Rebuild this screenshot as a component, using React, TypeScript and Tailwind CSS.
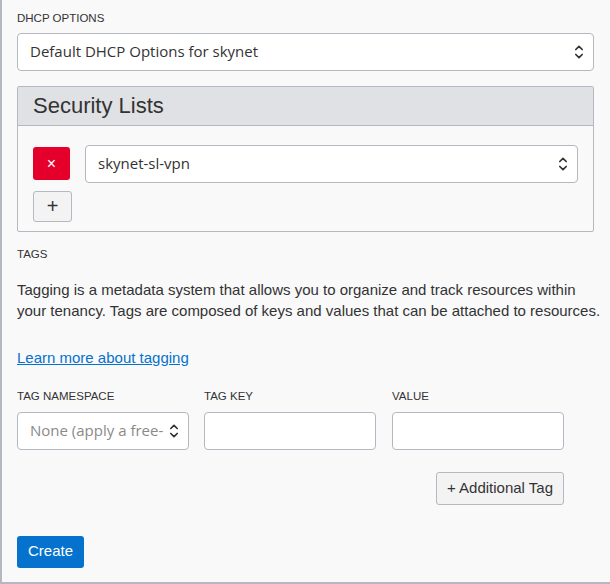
import React from 'react';

function Chevrons() {
  return (
    <svg width="10" height="16" viewBox="0 0 10 16" fill="none" stroke="#333" strokeWidth="1.7" strokeLinecap="round" strokeLinejoin="round">
      <path d="M1.8 5.5 L5 2.3 L8.2 5.5" />
      <path d="M1.8 10.5 L5 13.7 L8.2 10.5" />
    </svg>
  );
}

function SelectBox({ value, muted, className }: { value: string; muted?: boolean; className: string }) {
  return (
    <div className={`flex items-center bg-white border border-[#b4b8c0] rounded-[4px] overflow-hidden ${className}`}>
      <span
        className={`flex-1 whitespace-nowrap overflow-hidden text-[15px] ${muted ? 'text-[#8a8a8a]' : 'text-[#333]'}`}
        style={{ fontFamily: '"Open Sans", sans-serif' }}
      >
        {value}
      </span>
      <span className="pl-1 pr-[9px] flex items-center"><Chevrons /></span>
    </div>
  );
}

const label = 'text-[11.5px] text-[#333] uppercase leading-none';

export default function App() {
  return (
    <div className="w-[610px] h-[584px] bg-[#f9f9fa] border-l-2 border-b-2 border-[#b4b8c0] px-[15px] pt-[13px]" style={{ fontFamily: '"Liberation Sans", Arial, sans-serif' }}>
      <div className={label}>DHCP Options</div>
      <SelectBox value="Default DHCP Options for skynet" className="mt-[8px] h-[38px] w-[577px] pl-[12px]" />

      {/* Security lists panel */}
      <div className="mt-[15px] w-[577px] h-[146px] border border-[#b4b8c0] rounded-[2px] bg-[#f9f9fa]">
        <div className="h-[39px] bg-[#dfe1e5] border-b border-[#b4b8c0] px-[15px] flex items-center">
          <span className="text-[22px] text-[#333] leading-none">Security Lists</span>
        </div>
        <div className="pl-[15px] pt-[19px]">
          <div className="flex items-center gap-[15px]">
            <button className="w-[37px] h-[33px] bg-[#e4002b] rounded-[3px] text-white text-[16px] flex items-center justify-center">×</button>
            <SelectBox value="skynet-sl-vpn" className="h-[38px] w-[493px] pl-[12px]" />
          </div>
          <button className="mt-[8px] w-[39px] h-[31px] bg-[#f3f3f4] border border-[#b4b8c0] rounded-[3px] text-[#333] text-[20px] font-light flex items-center justify-center leading-none">+</button>
        </div>
      </div>

      <div className={`${label} mt-[17px]`}>Tags</div>
      <p className="mt-[19px] text-[15px] leading-[21px] text-[#333] w-[584px]">
        Tagging is a metadata system that allows you to organize and track resources within your tenancy. Tags are composed of keys and values that can be attached to resources.
      </p>
      <a className="block mt-[26px] text-[15px] leading-[21px] text-[#0572ce] underline w-fit">Learn more about tagging</a>

      <div className="mt-[23px] flex">
        <div className="w-[172px]">
          <div className={label}>Tag Namespace</div>
          <SelectBox value="None (apply a free-" muted className="mt-[9px] h-[38px] w-[172px] pl-[12px]" />
        </div>
        <div className="w-[172px] ml-[15px]">
          <div className={label}>Tag Key</div>
          <div className="mt-[9px] h-[38px] bg-white border border-[#b4b8c0] rounded-[4px]" />
        </div>
        <div className="w-[172px] ml-[16px]">
          <div className={label}>Value</div>
          <div className="mt-[9px] h-[38px] bg-white border border-[#b4b8c0] rounded-[4px]" />
        </div>
      </div>

      <div className="w-[547px] flex justify-end mt-[22px]">
        <button className="h-[33px] px-[10px] bg-[#f3f3f4] border border-[#b4b8c0] rounded-[3px] text-[15px] text-[#333]">+ Additional Tag</button>
      </div>

      <button className="mt-[31px] h-[32px] w-[67px] bg-[#0572ce] rounded-[3px] text-white text-[15px]">Create</button>
    </div>
  );
}
